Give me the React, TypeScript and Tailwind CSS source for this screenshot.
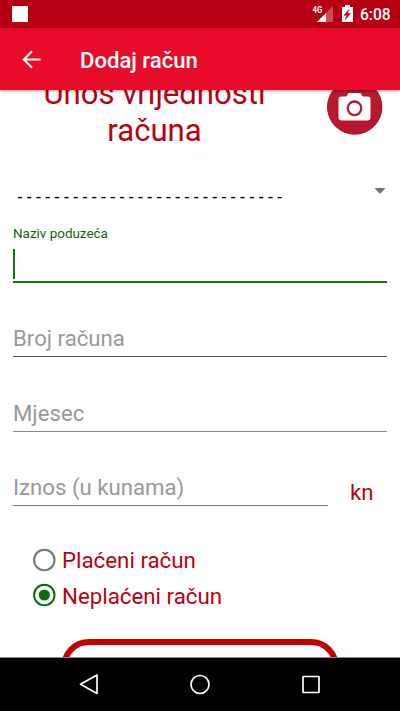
import React from 'react';

const red = 'text-[#b90011]';

function StatusBar() {
  return (
    <div className="flex h-[28px] shrink-0 items-center justify-between bg-[#b80012] pl-[12px] pr-[9px] text-white">
      <div className="h-[16px] w-[16px] bg-white" />
      <div className="flex items-center">
        <svg className="h-[28px] w-[48px]" viewBox="312 0 48 28">
          <text x="312.600" y="13" fontSize="9.500" fontWeight="700" fill="#fff" fontFamily="Roboto, sans-serif" textLength="9.800" lengthAdjust="spacingAndGlyphs">4G</text>
          <path d="M333 6v16h-16z" fill="#fff" fillOpacity=".3" />
          <path d="M326 13v9h-9z" fill="#fff" />
          <path d="M342 7h3V5h5v2h3v15h-11z" fill="#fff" />
          <path d="M348.800 9.500l-4.800 5.700h3l-1.600 4.300 5.200-6h-3.200z" fill="#b80012" stroke="#b80012" strokeWidth=".6" />
        </svg>
        <span className="w-[31px] whitespace-nowrap pt-[2px] text-[15.600px] font-medium leading-[26px]">6:08</span>
      </div>
    </div>
  );
}

function AppBar() {
  return (
    <div className="relative z-10 flex h-[62px] shrink-0 items-center bg-[#e80c2a] pl-[17.500px] text-white shadow-[0_1px_3px_rgba(0,0,0,0.4)]">
      <svg className="h-[27px] w-[27px]" viewBox="0 0 24 24" fill="none" stroke="#fff" strokeWidth="1.800">
        <path d="M20 12H5.500M12.500 4.700L5.200 12l7.300 7.300" />
      </svg>
      <h1 className="ml-[35.500px] pt-[1px] text-[22.100px] font-medium leading-[26px]">Dodaj račun</h1>
    </div>
  );
}

function CameraButton() {
  return (
    <svg className="mt-[5px] h-[56px] w-[56px]" viewBox="0 0 56 56">
      <defs>
        <linearGradient id="cam" x1="0" y1="0" x2="0" y2="1">
          <stop offset="0" stopColor="#b51c30" />
          <stop offset="1" stopColor="#b9152e" />
        </linearGradient>
      </defs>
      <circle cx="27.700" cy="28" r="27.200" fill="url(#cam)" stroke="#a51228" strokeWidth="1" />
      <path fill="#fff" d="M14.500 17.500h4q1.300 0 1.700-1.200l.5-1.300q.4-1 1.600-1h10.400q1.200 0 1.600 1l.5 1.300q.4 1.200 1.700 1.200h4q3 0 3 3v18q0 3-3 3H14.500q-3 0-3-3v-18q0-3 3-3z" />
      <circle cx="27.500" cy="29.300" r="6.800" fill="none" stroke="#b51c30" strokeWidth="2.300" />
    </svg>
  );
}

function Field({ label, className }: { label: string; className: string }) {
  return (
    <div className={`border-b text-[22.200px] leading-[26px] text-[#999] ${className}`}>{label}</div>
  );
}

function Radio({ label, checked }: { label: string; checked?: boolean }) {
  return (
    <div className={`flex h-[35.500px] items-center ${red}`}>
      <svg className="h-[24px] w-[24px]" viewBox="0 0 24 24">
        <circle cx="12.300" cy="12" r="10.200" fill="none" strokeWidth="2" stroke={checked ? '#0b6b0b' : '#757575'} />
        {checked && <circle cx="12.300" cy="12" r="5.600" fill="#0b6b0b" />}
      </svg>
      <span className="ml-[6px] pt-[1px] text-[22.300px] leading-[26px]">{label}</span>
    </div>
  );
}

export default function App() {
  return (
    <div className="flex h-[711px] w-[400px] flex-col overflow-hidden bg-white font-['Roboto',sans-serif]">
      <StatusBar />
      <AppBar />
      <main className="h-[567px] shrink-0 overflow-hidden bg-white">
        <div className="-mt-[16px] flex h-[90px] pl-[14px]">
          <h2 className={`w-[281px] pt-[2px] text-center text-[31.100px] leading-[36.500px] ${red}`}>Unos vrijednosti<br />računa</h2>
          <div className="ml-[31.500px]"><CameraButton /></div>
        </div>
        <div className="flex h-[62px] items-start justify-between pl-[17.500px] pr-[14px] pt-[22px]">
          <span className="whitespace-nowrap pt-px text-[17.700px] leading-[21px] text-black">{Array(29).fill('-').join(' ')}</span>
          <svg className="mt-[2px] h-[6px] w-[12px]" viewBox="0 0 12 6"><path d="M.5 0h11L6 6z" fill="#757575" /></svg>
        </div>
        <div className="mx-[13px] h-[57px] border-b-2 border-[#187018]">
          <div className="text-[13.450px] leading-[16px] text-[#106510]">Naziv poduzeća</div>
          <div className="mt-[7px] h-[30px] w-[2px] bg-[#187018]" />
        </div>
        <Field label="Broj računa" className="mx-[13px] mt-[42px] h-[32px] border-[#555]" />
        <Field label="Mjesec" className="mx-[13px] mt-[43px] h-[32px] border-[#888]" />
        <div className="flex pl-[13px]">
          <Field label="Iznos (u kunama)" className="mt-[42px] h-[32px] w-[315px] border-[#777]" />
          <span className={`ml-[22px] mt-[47px] text-[22.200px] leading-[26px] ${red}`}>kn</span>
        </div>
        <div className="pl-[32px] pt-[36px]">
          <Radio label="Plaćeni račun" />
          <Radio label="Neplaćeni račun" checked />
        </div>
        <div className="mx-auto mt-[26px] h-[62px] w-[278px] rounded-[28px] border-[6px] border-[#c00002]" />
      </main>
      <nav className="h-[54px] shrink-0 border-t border-[#888] bg-black">
        <svg className="h-[53px] w-[400px]" viewBox="0 658 400 53" fill="none" stroke="#fff" strokeWidth="1.700">
          <path d="M97 675v18.500L80.500 684.300z" strokeLinejoin="round" />
          <circle cx="200" cy="684.500" r="9" />
          <rect x="303" y="676.500" width="16" height="16" rx=".5" />
        </svg>
      </nav>
    </div>
  );
}
